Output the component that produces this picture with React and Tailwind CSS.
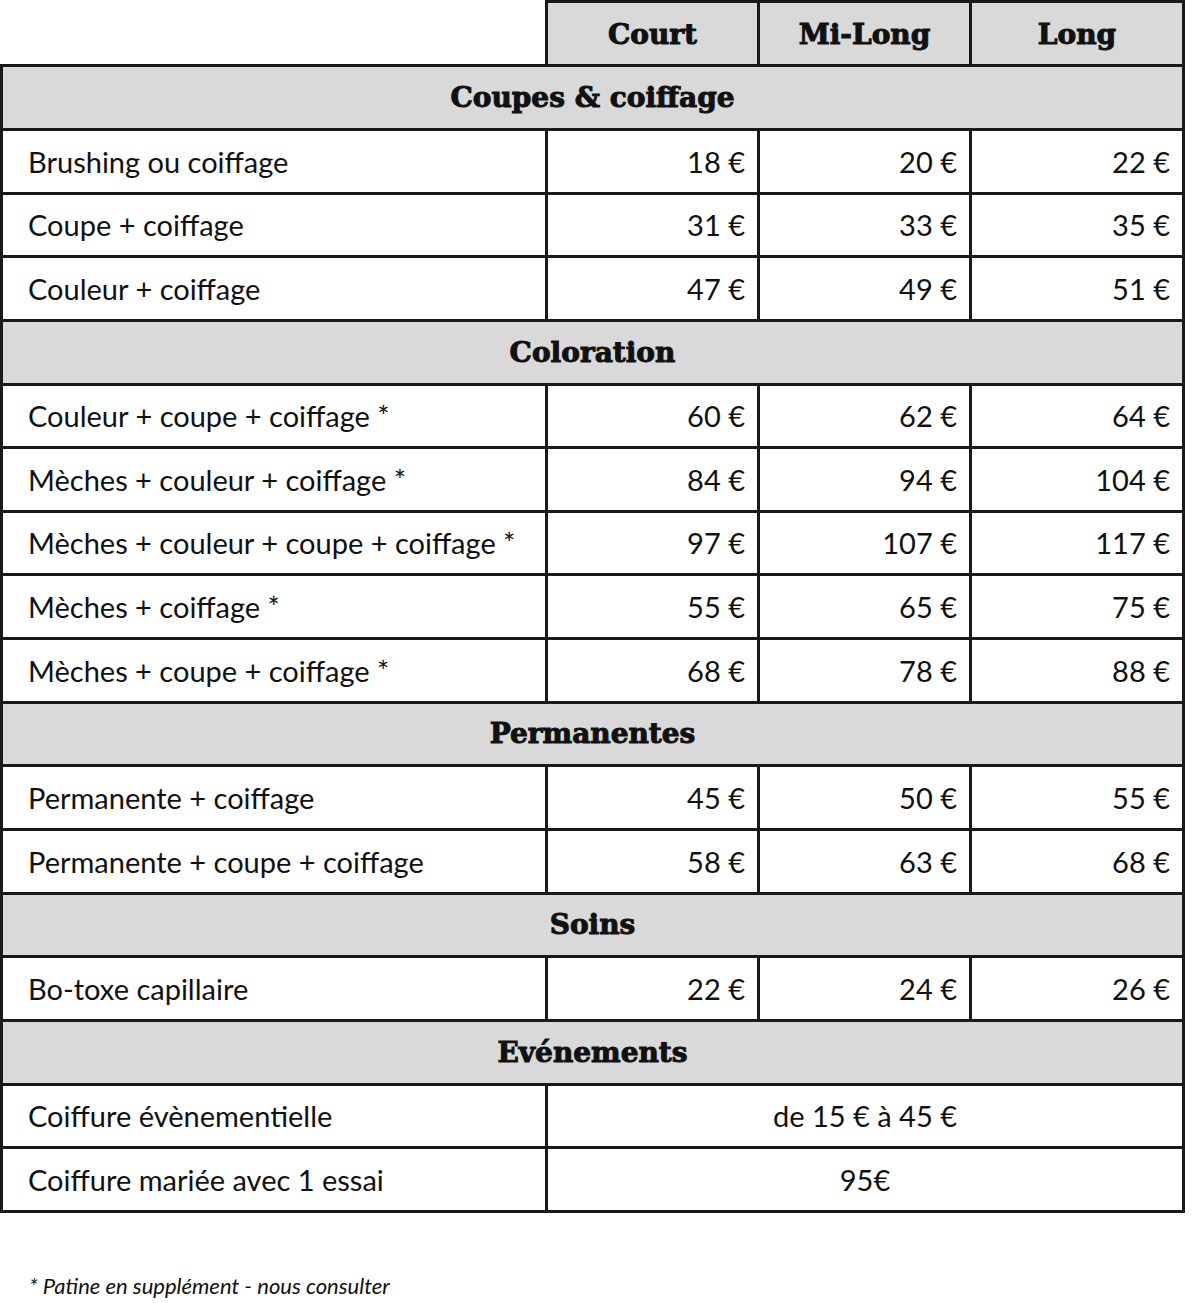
const sections = [
  {
    title: "Coupes & coiffage",
    rows: [
      ["Brushing ou coiffage", "18 €", "20 €", "22 €"],
      ["Coupe + coiffage", "31 €", "33 €", "35 €"],
      ["Couleur + coiffage", "47 €", "49 €", "51 €"],
    ],
  },
  {
    title: "Coloration",
    rows: [
      ["Couleur + coupe + coiffage *", "60 €", "62 €", "64 €"],
      ["Mèches + couleur + coiffage *", "84 €", "94 €", "104 €"],
      ["Mèches + couleur + coupe + coiffage *", "97 €", "107 €", "117 €"],
      ["Mèches + coiffage *", "55 €", "65 €", "75 €"],
      ["Mèches + coupe + coiffage *", "68 €", "78 €", "88 €"],
    ],
  },
  {
    title: "Permanentes",
    rows: [
      ["Permanente + coiffage", "45 €", "50 €", "55 €"],
      ["Permanente + coupe + coiffage", "58 €", "63 €", "68 €"],
    ],
  },
  {
    title: "Soins",
    rows: [["Bo-toxe capillaire", "22 €", "24 €", "26 €"]],
  },
  {
    title: "Evénements",
    rows: [
      ["Coiffure évènementielle", "de 15 € à 45 €"],
      ["Coiffure mariée avec 1 essai", "95€"],
    ],
  },
];

// row pitch in the picture is ~63.65px, so a few rows are one pixel shorter
const short = new Set([2, 5, 7, 10, 13, 16]);

const slab = { fontFamily: '"DejaVu Serif", "Liberation Serif", serif' };

export default function App() {
  const flat = [];
  sections.forEach((s) => {
    flat.push({ type: "section", title: s.title });
    s.rows.forEach((r) => flat.push({ type: "row", cells: r }));
  });

  return (
    <div
      className="w-[1200px] h-[1303px] bg-white text-[#111]"
      style={{ fontFamily: 'Lato, "Liberation Sans", sans-serif' }}
    >
      <div className="w-[1185px]">
        {/* header */}
        <div className="flex h-[64px]">
          <div className="w-[545px]" />
          {["Court", "Mi-Long", "Long"].map((h, i) => (
            <div
              key={h}
              className={
                "flex items-center justify-center pt-[2px] bg-[#d9d9d9] border-t-[3px] border-r-[3px] border-[#1a1a1a] text-[28px] font-bold [-webkit-text-stroke:1px_#111] " +
                (i === 0 ? "w-[215px] border-l-[3px]" : i === 1 ? "w-[212px]" : "w-[213px]")
              }
              style={slab}
            >
              {h}
            </div>
          ))}
        </div>

        {/* body */}
        <div className="border-l-[3px] border-t-[3px] border-[#1a1a1a]">
          {flat.map((r, idx) => {
            const h = short.has(idx) ? "h-[63px]" : "h-[64px]";
            if (r.type === "section") {
              return (
                <div
                  key={idx}
                  className={`${h} flex items-center justify-center bg-[#d9d9d9] border-r-[3px] border-b-[3px] border-[#1a1a1a] text-[28px] font-bold [-webkit-text-stroke:1px_#111]`}
                  style={slab}
                >
                  {r.title}
                </div>
              );
            }
            const [label, ...prices] = r.cells;
            return (
              <div key={idx} className={`${h} flex text-[29px]`}>
                <div className="w-[545px] flex items-center pl-[25px] border-r-[3px] border-b-[3px] border-[#1a1a1a]">
                  {label}
                </div>
                {prices.length === 1 ? (
                  <div className="w-[637px] flex items-center justify-center border-r-[3px] border-b-[3px] border-[#1a1a1a]">
                    {prices[0]}
                  </div>
                ) : (
                  prices.map((p, i) => (
                    <div
                      key={i}
                      className={
                        "flex items-center justify-end pr-[12px] border-r-[3px] border-b-[3px] border-[#1a1a1a] " +
                        (i === 2 ? "w-[213px]" : "w-[212px]")
                      }
                    >
                      {p}
                    </div>
                  ))
                )}
              </div>
            );
          })}
        </div>
      </div>

      <div className="mt-[56px] pl-[29px] text-[22px] italic">
        * Patine en supplément - nous consulter
      </div>
    </div>
  );
}
